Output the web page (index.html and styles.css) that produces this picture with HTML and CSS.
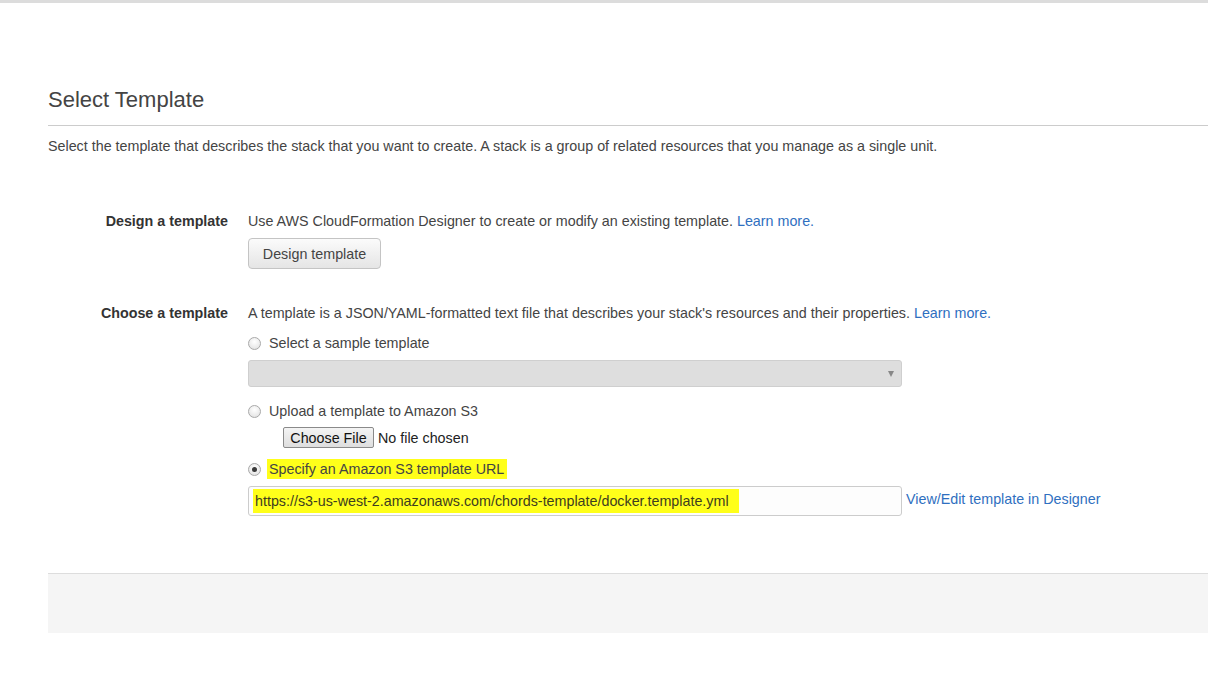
FILE: index.html
```html
<!DOCTYPE html>
<html>
<head>
<meta charset="utf-8">
<link rel="stylesheet" href="styles.css">
</head>
<body>
<div class="topbar"></div>
<div class="page">
  <h1 class="title">Select Template</h1>
  <p class="desc">Select the template that describes the stack that you want to create. A stack is a group of related resources that you manage as a single unit.</p>

  <div class="row row-design">
    <div class="label">Design a template</div>
    <div class="content">
      <div class="line">Use AWS CloudFormation Designer to create or modify an existing template. <a class="link" href="#">Learn more.</a></div>
      <button class="btn">Design template</button>
    </div>
  </div>

  <div class="row row-choose">
    <div class="label">Choose a template</div>
    <div class="content">
      <div class="line">A template is a JSON/YAML-formatted text file that describes your stack's resources and their properties. <a class="link" href="#">Learn more.</a></div>

      <label class="radio-line r1"><span class="radio"></span>Select a sample template</label>
      <div class="select"><span class="arrow"></span></div>

      <label class="radio-line r2"><span class="radio"></span>Upload a template to Amazon S3</label>
      <div class="file-row"><span class="file-btn">Choose File</span><span class="file-text">No file chosen</span></div>

      <label class="radio-line r3"><span class="radio checked"></span><span class="hl hl-label">Specify an Amazon S3 template URL</span></label>
      <div class="url-row">
        <div class="url-input"><span class="hl hl-url">https://s3-us-west-2.amazonaws.com/chords-template/docker.template.yml</span></div>
        <a class="link view-link" href="#">View/Edit template in Designer</a>
      </div>
    </div>
  </div>

  <div class="footer"></div>
</div>
</body>
</html>
```
FILE: styles.css
```css
html, body {
  margin: 0;
  padding: 0;
  background: #ffffff;
}
body {
  font-family: "Liberation Sans", Arial, sans-serif;
  font-size: 14.3px;
  line-height: 18px;
  color: #444444;
}
.topbar {
  height: 3px;
  background: #dcdcdc;
}
.page {
  padding-left: 48px;
}
.title {
  margin: 0;
  padding-top: 84px;
  padding-bottom: 12px;
  font-size: 22px;
  line-height: 26px;
  font-weight: normal;
  color: #444444;
  border-bottom: 1px solid #cccccc;
}
.desc {
  margin: 11px 0 0 0;
  color: #444444;
}
.row {
  display: grid;
  grid-template-columns: 180px 1fr;
  column-gap: 20px;
}
.row-design {
  margin-top: 57px;
}
.row-choose {
  margin-top: 35px;
}
.label {
  text-align: right;
  font-weight: bold;
  color: #333333;
  font-size: 14.3px;
}
.content {
  display: flex;
  flex-direction: column;
  align-items: flex-start;
}
.link {
  color: #2f6fc0;
  text-decoration: none;
}
.btn {
  margin-top: 8px;
  width: 133px;
  height: 31px;
  border: 1px solid #c4c4c4;
  border-radius: 4px;
  background: linear-gradient(#fbfbfb, #e5e5e5);
  font-family: "Liberation Sans", Arial, sans-serif;
  font-size: 14.3px;
  color: #444444;
  padding: 0;
}
.radio-line {
  display: flex;
  align-items: center;
  height: 18px;
}
.r1 { margin-top: 12px; }
.r2 { margin-top: 15px; }
.r3 { margin-top: 12px; }
.radio {
  width: 11px;
  height: 11px;
  border: 1px solid #a9a9a9;
  border-radius: 50%;
  background: radial-gradient(circle at 50% 35%, #ffffff 0%, #e8e8e8 70%, #d6d6d6 100%);
  margin-right: 8px;
  box-sizing: content-box;
  position: relative;
}
.radio.checked::after {
  content: "";
  position: absolute;
  left: 3px;
  top: 3px;
  width: 5px;
  height: 5px;
  border-radius: 50%;
  background: #3a3a3a;
}
.select {
  margin-top: 8px;
  width: 654px;
  height: 27px;
  background: #dedede;
  border: 1px solid #cfcfcf;
  border-radius: 3px;
  box-sizing: border-box;
  display: flex;
  justify-content: flex-end;
  align-items: center;
  padding-right: 7px;
}
.arrow {
  width: 0;
  height: 0;
  border-left: 3px solid transparent;
  border-right: 3px solid transparent;
  border-top: 6px solid #888888;
}
.file-row {
  margin-top: 7px;
  margin-left: 35px;
  display: flex;
  align-items: center;
}
.file-btn {
  width: 91px;
  height: 21px;
  box-sizing: border-box;
  border: 1px solid #8a8a8a;
  border-radius: 2px;
  background: linear-gradient(#f4f4f4, #dedede);
  color: #111111;
  display: flex;
  align-items: center;
  justify-content: center;
  font-size: 14.3px;
}
.file-text {
  margin-left: 4px;
  color: #222222;
}
.hl {
  background: #ffff1a;
}
.hl-label {
  padding: 1px 3px 1px 2px;
  margin-left: -2px;
}
.url-row {
  margin-top: 8px;
  display: flex;
  align-items: flex-start;
}
.url-input {
  width: 654px;
  height: 30px;
  box-sizing: border-box;
  border: 1px solid #cccccc;
  border-radius: 3px;
  background: #fdfdfd;
  display: flex;
  align-items: center;
  padding-left: 4px;
}
.hl-url {
  padding: 3px 10px 3px 2px;
  color: #3d3d20;
}
.view-link {
  margin-left: 4px;
  margin-top: 4px;
}
.footer {
  margin-top: 57px;
  height: 59px;
  background: #f5f5f5;
  border-top: 1px solid #dddddd;
}
```
